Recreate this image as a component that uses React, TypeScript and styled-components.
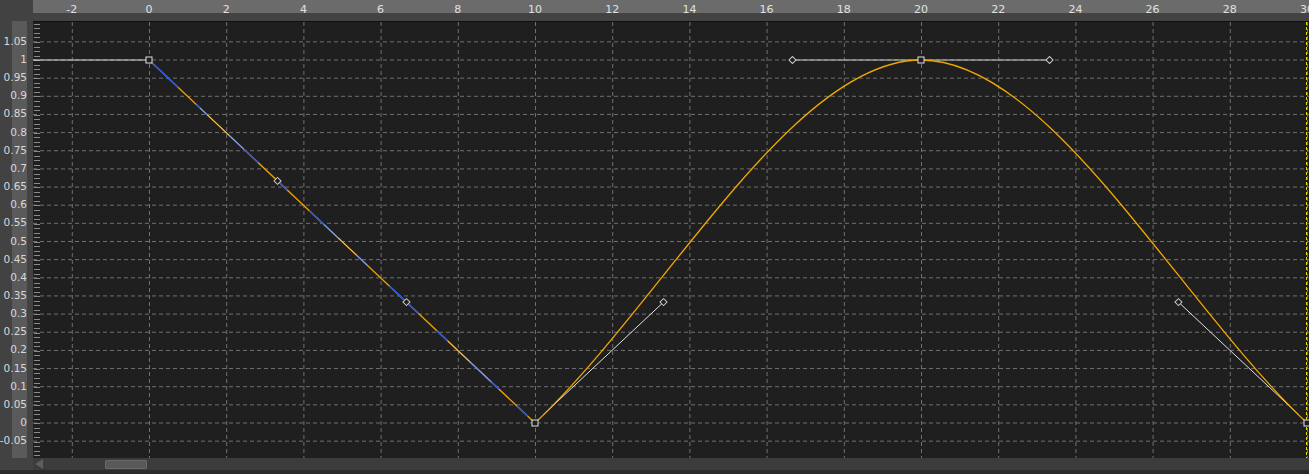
import React from "react";
import styled, { createGlobalStyle } from "styled-components";

const G = createGlobalStyle`
  html,body{margin:0;padding:0;background:#3a3a3a;overflow:hidden;}
  *{box-sizing:border-box;}
`;
const W = 1309;
const GW = W - 33;
const GH = 437;
const fx = (f: number) => 116 + 38.6 * f;
const vy = (v: number) => 401 - 363 * v;

const Root = styled.div`
  width:${W}px;height:474px;display:flex;flex-direction:column;background:#424242;
  font-family:"DejaVu Sans",sans-serif;
`;
const TopRow = styled.div`display:flex;height:13px;`;
const Corner = styled.div`width:33px;background:#424242;`;
const Ruler = styled.div`flex:1;background:#6b6b6b;`;
const Band = styled.div`height:8px;background:#434343;margin-left:33px;`;
const Mid = styled.div`display:flex;height:${GH}px;`;
const Side = styled.div`width:33px;display:flex;padding-left:12px;padding-right:6px;`;
const ValCol = styled.div`flex:1;background:#5a5a5a;`;
const Graph = styled.div`width:${GW}px;background:#1f1f1f;border-top:1px solid #101010;`;
const Scroll = styled.div`height:12px;margin-left:33px;background:#3c3c3c;display:flex;align-items:center;padding-left:2px;`;
const Arrow = styled.div`width:0;height:0;border-top:5px solid transparent;border-bottom:5px solid transparent;border-right:8px solid #5e5e5e;`;
const Thumb = styled.div`margin-left:62px;width:42px;height:9px;background:#595959;border:1px solid #6a6a6a;border-radius:1px;`;
const Bottom = styled.div`flex:1;background:#2b2b2b;`;

const frames = Array.from({ length: 17 }, (_, i) => -2 + 2 * i);
const vals = Array.from({ length: 23 }, (_, i) => 1.05 - 0.05 * i);
const fmt = (v: number) => {
  const r = Math.round(v * 100) / 100;
  return Math.abs(r) < 1e-9 ? "0" : String(r);
};

function Diamond({ x, y }: { x: number; y: number }) {
  return <rect x={x - 2.5} y={y - 2.5} width={5} height={5} fill="#1f1f1f" stroke="#ccc" strokeWidth={1} transform={`rotate(45 ${x} ${y})`} />;
}
function Key({ x, y }: { x: number; y: number }) {
  return <rect x={x - 3} y={y - 3} width={6} height={6} fill="#1f1f1f" stroke="#e0e0e0" strokeWidth={1} />;
}

export default function App() {
  const k0 = [fx(0), vy(1)], k10 = [fx(10), vy(0)], k20 = [fx(20), vy(1)], k30 = [fx(30), vy(0)];
  const ticks: number[] = [];
  for (let y = vy(1.05) - 18; y < GH; y += 4.54) ticks.push(y);
  return (
    <Root>
      <G />
      <TopRow>
        <Corner />
        <Ruler>
          <svg width={GW} height={13}>
            {frames.map(f => (
              <text key={f} x={fx(f)} y={10.5} fill="#e0e0e0" fontSize={11} textAnchor="middle" fontFamily="DejaVu Sans">{f}</text>
            ))}
          </svg>
        </Ruler>
      </TopRow>
      <Band />
      <Mid>
        <Side>
          <ValCol>
            <svg width={15} height={GH} style={{ overflow: "visible" }}>
              {vals.map(v => (
                <text key={v} x={15} y={vy(v) + 4} fill="#d8d8d8" fontSize={10.5} textAnchor="end" fontFamily="DejaVu Sans">{fmt(v)}</text>
              ))}
            </svg>
          </ValCol>
        </Side>
        <Graph>
          <svg width={GW} height={GH - 1}>
            {vals.map(v => (
              <line key={v} x1={0} x2={GW} y1={vy(v)} y2={vy(v)} stroke="#707070" strokeDasharray="4 3" strokeWidth={1} />
            ))}
            {frames.map(f => (
              <line key={f} x1={fx(f) + 0.5} x2={fx(f) + 0.5} y1={0} y2={GH} stroke="#707070" strokeDasharray="4 3" strokeWidth={1} />
            ))}
            {ticks.map((y, i) => (
              <line key={i} x1={1} x2={7} y1={Math.round(y) + 0.5} y2={Math.round(y) + 0.5} stroke="#8a8a8a" />
            ))}
            <line x1={1273.5} x2={1273.5} y1={0} y2={GH} stroke="#e8e000" strokeDasharray="3 2" />
            <line x1={0} x2={k0[0]} y1={k0[1]} y2={k0[1]} stroke="#e0e0e0" strokeWidth={1.2} />
            <line x1={k0[0]} y1={k0[1]} x2={k10[0]} y2={k10[1]} stroke="#f0a000" strokeWidth={1.3} />
            <line x1={k0[0]} y1={k0[1]} x2={k10[0]} y2={k10[1]} stroke="#1a55ff" strokeWidth={1.4} strokeDasharray="40 25 15 30" />
            <line x1={k0[0]} y1={k0[1]} x2={k10[0]} y2={k10[1]} stroke="#d8d8d8" strokeWidth={0.7} strokeDasharray="0 70 60 40" />
            <line x1={k10[0] + 8} y1={k10[1] - 8} x2={fx(13.33)} y2={vy(0.333)} stroke="#e0e0e0" />
            <line x1={fx(16.67)} y1={vy(1)} x2={fx(23.33)} y2={vy(1)} stroke="#d0d0d0" />
            <line x1={fx(26.67)} y1={vy(0.333)} x2={k30[0] - 8} y2={k30[1] - 8} stroke="#e0e0e0" />
            <path d={`M${k10[0]} ${k10[1]} C${fx(13.33)} ${vy(0.333)} ${fx(16.67)} ${vy(1)} ${k20[0]} ${k20[1]} C${fx(23.33)} ${vy(1)} ${fx(26.67)} ${vy(0.333)} ${k30[0]} ${k30[1]}`} fill="none" stroke="#f0a800" strokeWidth={1.3} />
            <Diamond x={fx(3.33)} y={vy(0.667)} />
            <Diamond x={fx(6.67)} y={vy(0.333)} />
            <Diamond x={fx(13.33)} y={vy(0.333)} />
            <Diamond x={fx(16.67)} y={vy(1)} />
            <Diamond x={fx(23.33)} y={vy(1)} />
            <Diamond x={fx(26.67)} y={vy(0.333)} />
            <Key x={k0[0]} y={k0[1]} />
            <Key x={k10[0]} y={k10[1]} />
            <Key x={k20[0]} y={k20[1]} />
            <Key x={k30[0]} y={k30[1]} />
          </svg>
        </Graph>
      </Mid>
      <Scroll>
        <Arrow />
        <Thumb />
      </Scroll>
      <Bottom />
    </Root>
  );
}
